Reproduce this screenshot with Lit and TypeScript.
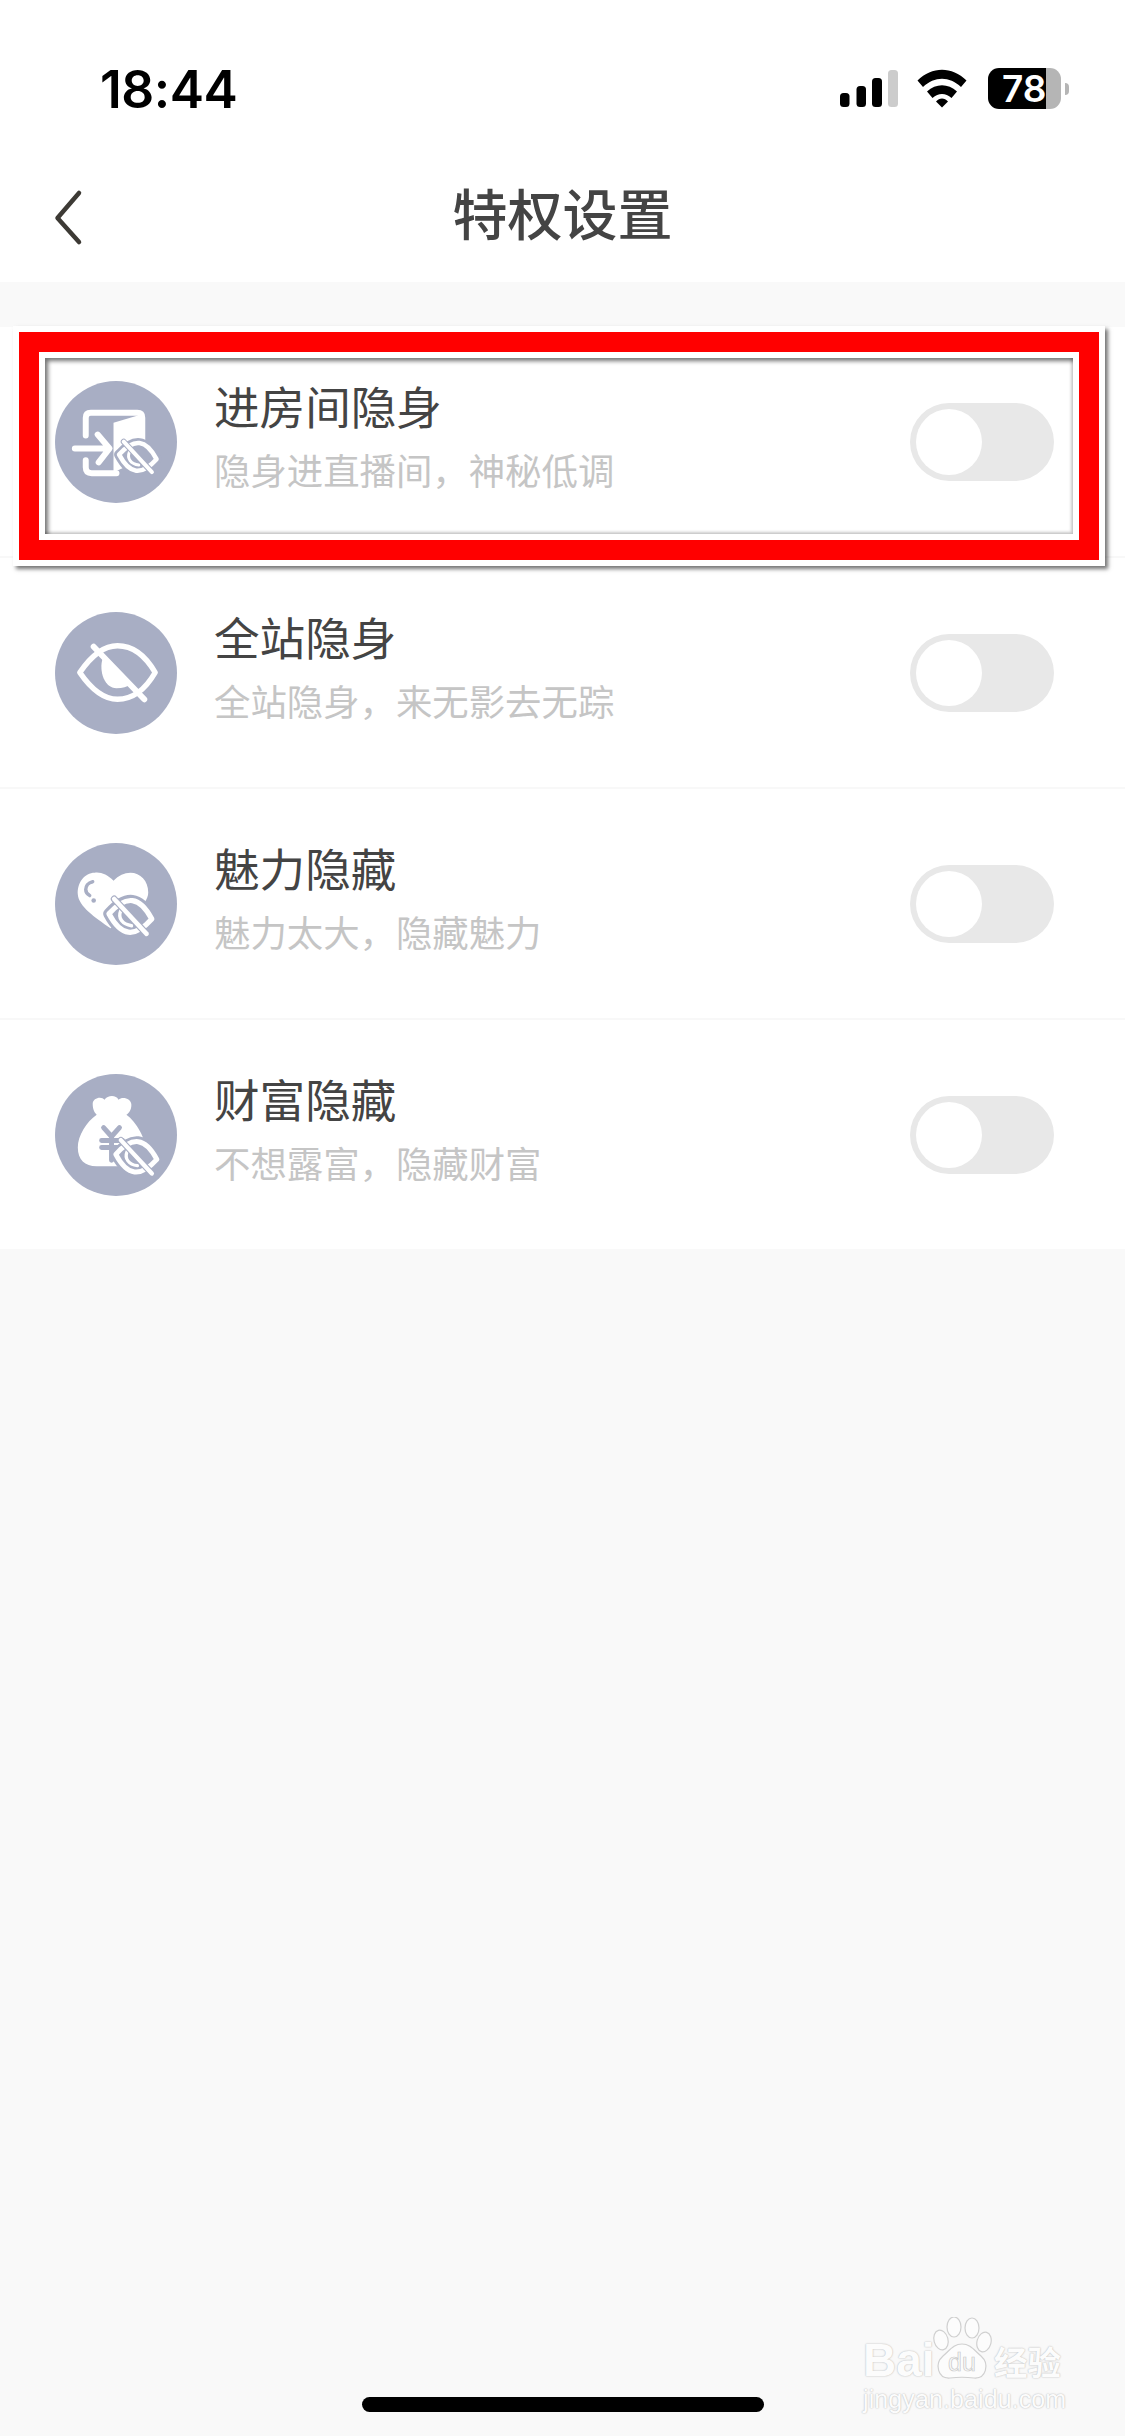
import { LitElement, html, css, svg } from "lit";
import { customElement } from "lit/decorators.js";

const BLUE = "#a8aec4";

const EYE = "M-19 0C-12 -10 -6 -14 0 -14C6 -14 12 -10 19 0C12 10 6 14 0 14C-6 14 -12 10 -19 0Z";

const badge = (cx: number, cy: number, w: number) => {
  const s = w / 41;
  return svg`<g transform="translate(${cx} ${cy}) rotate(7) scale(${s})" stroke-linecap="round" stroke-linejoin="round" fill="none">
    <path d="${EYE}" fill="${BLUE}" stroke="${BLUE}" stroke-width="10"/>
    <path d="${EYE}" stroke="#fff" stroke-width="4.6"/>
    <path d="M-9 -4C-11 3 -6 8 2 8" stroke="#fff" stroke-width="3"/>
    <path d="M-16 -13.5L16 13.5" stroke="${BLUE}" stroke-width="6"/>
    <path d="M-16 -13.5L16 13.5" stroke="#fff" stroke-width="4"/>
  </g>`;
};

const icons = [
  svg`<path d="M31 55V37Q31 32 36 32H83Q88 32 88 37V72" fill="none" stroke="#fff" stroke-width="6" stroke-linecap="round"/>
      <path d="M59 42L86 34V80L59 92Z" fill="#fff"/>
      <path d="M31 80V87Q31 93 37 93H62" fill="none" stroke="#fff" stroke-width="6" stroke-linecap="round"/>
      <path d="M20 68H54M43 54L55 68L44 82" fill="none" stroke="#fff" stroke-width="6" stroke-linecap="round" stroke-linejoin="round"/>
      ${badge(83.5, 76.5, 41)}`,
  svg`<path d="M25 61C38 42 50 34 63 34C76 34 90 42 101 61C90 80 76 88 63 88C50 88 38 80 25 61Z" fill="none" stroke="#fff" stroke-width="5.5" stroke-linejoin="round"/>
      <path d="M48 47C44 60 50 77 62 77C68 77 73 75 76 73Z" fill="#fff"/>
      <path d="M39 35L90 88" fill="none" stroke="#fff" stroke-width="6" stroke-linecap="round"/>`,
  svg`<path d="M59 38C53 32 46 29 40 30C30 30 22 40 23 52C24 64 40 75 56 86C72 75 94 64 94 50C94 38 86 30 76 30C70 30 64 33 59 38Z" fill="#fff"/>
      <path d="M38 39C33 40 31 44 31 47C31 50 33 52 35 53" fill="none" stroke="${BLUE}" stroke-width="3.5" stroke-linecap="round"/>
      <circle cx="39" cy="58" r="2.3" fill="${BLUE}"/>
      ${badge(76, 74, 47)}`,
  svg`<path d="M38 30C38 24 47 22 50 26C53 21 62 21 64 26C68 22 77 25 77 31C77 36 75 39 72 41C82 48 92 66 92 78C92 88 84 93 74 93H42C30 93 23 86 23 74C23 62 32 48 42 41C40 39 38 36 38 30Z" fill="#fff"/>
      <path d="M49 54L57 63L65 54M47 67H68M47 74H68M57 63V87" fill="none" stroke="${BLUE}" stroke-width="5" stroke-linecap="round" stroke-linejoin="round"/>
      ${badge(82, 83.5, 45)}`,
];

const rows = [
  ["进房间隐身", "隐身进直播间，神秘低调"],
  ["全站隐身", "全站隐身，来无影去无踪"],
  ["魅力隐藏", "魅力太大，隐藏魅力"],
  ["财富隐藏", "不想露富，隐藏财富"],
];

@customElement("app-root")
export class AppRoot extends LitElement {
  static styles = css`
    :host {
      display: block;
      position: relative;
      width: 1125px;
      height: 2436px;
      overflow: hidden;
      background: #f9f9f9;
      font-family: "Noto Sans CJK SC", "Liberation Sans", sans-serif;
    }
    .top { background: #fff; height: 282px; display: flex; flex-direction: column; }
    .status {
      height: 138px;
      display: flex;
      align-items: flex-start;
      padding: 65px 64px 0 100px;
      box-sizing: border-box;
    }
    .time {
      flex: 1;
      font-family: Inter, "Liberation Sans", sans-serif;
      font-weight: 600;
      font-size: 51.5px;
      line-height: 48px;
      letter-spacing: -0.5px;
      color: #000;
    }
    .sys { display: block; margin-top: 3px; }
    .batt {
      position: relative;
      width: 73px;
      height: 41px;
      margin: 3px 0 0 21px;
      border-radius: 11px;
      background: linear-gradient(90deg, #000 58px, #b5b5b5 58px);
      box-sizing: border-box;
      padding-left: 14px;
      font-family: Inter, "Liberation Sans", sans-serif;
      font-weight: 600;
      font-size: 37px;
      line-height: 41px;
      color: #fff;
    }
    .batt::after {
      content: "";
      position: absolute;
      right: -8px;
      top: 15px;
      width: 4px;
      height: 12px;
      border-radius: 0 6px 6px 0;
      background: #b5b5b5;
    }
    .nav {
      position: relative;
      flex: 1;
      display: flex;
      align-items: center;
      justify-content: center;
      padding-top: 2px;
      box-sizing: border-box;
    }
    .title { font-size: 55px; line-height: 60px; font-weight: 500; color: #444; }
    .back { position: absolute; left: 50px; top: 49px; }
    .list { margin-top: 45px; background: #fff; }
    .row {
      height: 229px;
      display: flex;
      align-items: center;
      padding: 0 71px 0 54.5px;
      border-bottom: 2px solid #f8f8f8;
    }
    .row:last-child { border-bottom: 0; }
    .icon { width: 122px; height: 122px; flex: none; display: block; }
    .texts { flex: 1; padding: 0 0 12px 37.5px; display: flex; flex-direction: column; gap: 17px; }
    .name { font-size: 45.6px; line-height: 50px; color: #444; }
    .sub { font-size: 36.4px; line-height: 44px; color: #c5c5c5; font-weight: 400; }
    .toggle {
      width: 144px;
      height: 78px;
      border-radius: 39px;
      background: #e8e8e8;
      padding: 6px;
      box-sizing: border-box;
      flex: none;
    }
    .knob { width: 66px; height: 66px; border-radius: 50%; background: #fff; }
    .mark {
      position: absolute;
      left: 13px;
      top: 326px;
      width: 1092px;
      height: 240px;
      box-sizing: border-box;
      border: 6px solid #fff;
      box-shadow: 3px 3px 4px rgba(0, 0, 0, 0.55);
      pointer-events: none;
    }
    .mark-red { width: 100%; height: 100%; box-sizing: border-box; border: 20px solid #f00; }
    .mark-in {
      width: 100%;
      height: 100%;
      box-sizing: border-box;
      border: 6px solid #fff;
    }
    .mark-line {
      width: 100%;
      height: 100%;
      box-sizing: border-box;
      box-shadow: inset 3px 3px 4px rgba(0, 0, 0, 0.55), inset -2px -2px 3px rgba(0, 0, 0, 0.2);
    }
    .home {
      position: absolute;
      left: 362px;
      top: 2397px;
      width: 402px;
      height: 15px;
      border-radius: 8px;
      background: #000;
    }
    .wm {
      position: absolute;
      left: 863px;
      top: 2317px;
      width: 205px;
      color: #fcfcfc;
      font-family: "Liberation Sans", sans-serif;
      text-shadow: 0 0 2px #c4c4c4, 0 0 1px #c4c4c4;
    }
    .wm-top { display: flex; align-items: flex-end; height: 63px; }
    .wm-bai { font-size: 46px; line-height: 40px; font-weight: 700; width: 69px; flex: none; }
    .wm-cn {
      font-family: "Noto Sans CJK SC", sans-serif;
      font-size: 33.5px;
      line-height: 38px;
      font-weight: 700;
      margin-left: 2px;
      white-space: nowrap;
    }
    .wm-paw { display: block; flex: none; }
    .wm-du {
      font-family: "Liberation Sans", sans-serif;
      font-size: 25px;
      fill: #fafafa;
      stroke: #c8c8c8;
      stroke-width: 0.7;
      text-shadow: none;
    }
    .wm-url { font-size: 25px; line-height: 25px; margin-top: 7px; white-space: nowrap; letter-spacing: 0.1px; }
  `;

  render() {
    return html`
      <div class="top">
        <div class="status">
          <div class="time">18:44</div>
          <svg class="sys" width="127" height="41" viewBox="840 68 127 41">
            <rect x="840" y="93" width="9.5" height="14" rx="3.5" fill="#000"/>
            <rect x="856.5" y="86" width="9.5" height="21" rx="3.5" fill="#000"/>
            <rect x="872" y="78" width="10" height="29" rx="3.5" fill="#000"/>
            <rect x="888" y="70" width="10" height="37" rx="3.5" fill="#ccc"/>
            <path d="M917.5 80.5C932 66 952 66 966.5 80.5L961 87C949.5 76 934.5 76 923 87Z" fill="#000"/>
            <path d="M927 91.5C936 83 948 83 957 91.5L951.5 98C945.5 92.5 938.5 92.5 932.5 98Z" fill="#000"/>
            <path d="M936 101.5C939.5 97.5 944.5 97.5 948 101.5L942 107.5Z" fill="#000"/>
          </svg>
          <div class="batt">78</div>
        </div>
        <div class="nav">
          <svg class="back" width="36" height="60" viewBox="0 0 36 60">
            <path d="M29 6L7.5 31L29 55" fill="none" stroke="#3d3a35" stroke-width="4.5" stroke-linecap="round" stroke-linejoin="round"/>
          </svg>
          <div class="title">特权设置</div>
        </div>
      </div>
      <div class="list">
        ${rows.map(
          (r, i) => html`
            <div class="row">
              <svg class="icon" viewBox="0 0 123 123">
                <circle cx="61.5" cy="61.5" r="61.5" fill="${BLUE}"/>
                ${icons[i]}
              </svg>
              <div class="texts">
                <div class="name">${r[0]}</div>
                <div class="sub">${r[1]}</div>
              </div>
              <div class="toggle"><div class="knob"></div></div>
            </div>
          `
        )}
      </div>
      <div class="mark"><div class="mark-red"><div class="mark-in"><div class="mark-line"></div></div></div></div>
      <div class="home"></div>
      <div class="wm">
        <div class="wm-top">
          <span class="wm-bai">Bai</span>
          <svg class="wm-paw" width="60" height="63" viewBox="0 0 60 63">
            <g fill="#fcfcfc" stroke="#d0d0d0" stroke-width="1.2">
              <path d="M30 27C38 27 42 33 49 39C58 47 54 62 42 61C34 60 26 60 18 61C6 62 2 47 11 39C18 33 22 27 30 27Z"/>
              <ellipse cx="9" cy="23" rx="7" ry="10" transform="rotate(-15 9 23)"/>
              <ellipse cx="22" cy="10" rx="7" ry="10"/>
              <ellipse cx="40" cy="11" rx="7" ry="10"/>
              <ellipse cx="52" cy="25" rx="7" ry="10" transform="rotate(15 52 25)"/>
            </g>
            <text class="wm-du" x="16" y="54">du</text>
          </svg>
          <span class="wm-cn">经验</span>
        </div>
        <div class="wm-url">jingyan.baidu.com</div>
      </div>
    `;
  }
}
